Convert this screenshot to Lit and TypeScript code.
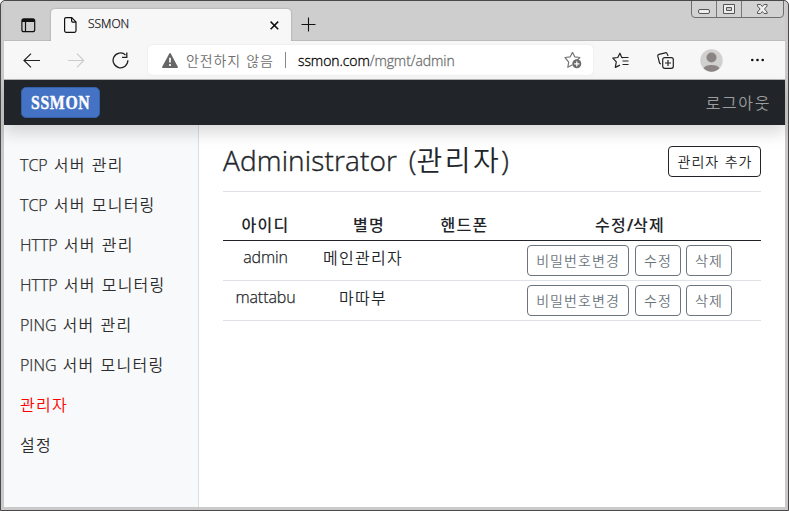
import { LitElement, html, css } from "lit";
import { customElement } from "lit/decorators.js";
import { classMap } from "lit/directives/class-map.js";

/** Splits mixed text so that Hangul and Latin runs get their own tracking. */
const mixed = (s: string) =>
  s
    .split(/([\uac00-\ud7a3]+)/)
    .filter((p) => p)
    .map((p) => (/[\uac00-\ud7a3]/.test(p) ? html`<span class="ko">${p}</span>` : html`<span class="en">${p}</span>`));

const textStyles = css`
  .ko {
    font-family: "Noto Sans CJK KR", sans-serif;
    letter-spacing: var(--ko-track, 0.077em);
    font-weight: var(--ko-weight, 350);
  }
  .en {
    white-space: pre;
    letter-spacing: var(--en-track, 0em);
    word-spacing: 0.12em;
    font-weight: var(--en-weight, 300);
    -webkit-text-stroke: 0.25px currentColor;
  }
`;

@customElement("browser-tabs")
class BrowserTabs extends LitElement {
  static styles = [
    textStyles,
    css`
      :host { display: flex; height: 40px; background: #cecece; box-sizing: border-box; position: relative; box-shadow: inset 0 -1px #bcbcbc; }
      .panel { width: 47px; display: flex; padding: 17px 0 0 17px; box-sizing: border-box; }
      .tab { width: 240px; height: 32px; margin-top: 8px; background: #f7f7f7; border-radius: 4px 4px 0 0; display: flex; align-items: center; box-sizing: border-box; padding: 0 12px 0 13px; box-shadow: 0 0 2px rgba(0, 0, 0, 0.3); clip-path: inset(-3px -3px 0 -3px); }
      .name { flex: 1; margin-left: 11px; font-size: 12px; line-height: 16px; margin-top: -2px; color: #111; letter-spacing: 0; font-weight: 300; -webkit-text-stroke: 0.25px currentColor; }
      .plus { margin: 16px 0 0 10px; }
      .controls { position: absolute; right: 1px; top: -1px; display: flex; width: 93px; height: 18px; box-sizing: border-box; border: 1px solid #6e6e6e; border-radius: 0 0 4px 4px; background: #d2d2d2; }
      svg { display: block; flex: none; }
    `,
  ];
  render() {
    return html`
      <div class="panel">
        <svg width="15" height="15" viewBox="0 0 15 15" fill="none" stroke="#111" stroke-width="1.2">
          <rect x=".9" y=".9" width="12.8" height="12.8" rx="2" />
          <path d="M1 3h12.6M1 2h12.6" stroke-width="2" /><path d="M4.5 4v9.5" />
        </svg>
      </div>
      <div class="tab">
        <svg width="13" height="16" viewBox="0 0 13 16" fill="none" stroke="#111" stroke-width="1.2">
          <path d="M2.1.6h5.6l4.3 4.3v8.9a1.5 1.5 0 0 1-1.5 1.5H2.1A1.5 1.5 0 0 1 .6 13.8V2.1A1.5 1.5 0 0 1 2.1.6zM7.6.8v3a1.3 1.3 0 0 0 1.3 1.3h3" />
        </svg>
        <span class="name">SSMON</span>
        <svg width="9" height="9" viewBox="0 0 9 9" stroke="#111" stroke-width="1.5"><path d="M.6.6l7.6 7.6M8.2.6L.6 8.2" /></svg>
      </div>
      <svg class="plus" width="15" height="15" viewBox="0 0 15 15" stroke="#111" stroke-width="1.1"><path d="M7.5.5v14M.5 7.5h14" /></svg>
      <div class="controls">
        <svg width="91" height="16" viewBox="0 0 91 16" fill="none" stroke="#555">
          <path d="M24.5 0v16M49.5 0v16" stroke="#777" />
          <rect x="6.5" y="8.5" width="11" height="4" rx="1.5" fill="#eee" />
          <path d="M31.5 3.5h11v9h-11z" fill="#eee" /><path d="M34.5 6.5h5v3h-5z" fill="#ccc" />
          <path d="M65.5 3.5h3l1.8 2 1.8-2h3v1.5l-2.6 3 2.6 3v1.5h-3l-1.8-2-1.8 2h-3V11l2.6-3-2.6-3z" fill="#eee" />
        </svg>
      </div>
    `;
  }
}

@customElement("browser-toolbar")
class BrowserToolbar extends LitElement {
  static styles = [
    textStyles,
    css`
      :host { display: flex; height: 38px; align-items: center; background: #f7f7f7; border-bottom: 1px solid #b4b4b4; box-sizing: content-box; }
      svg { display: block; flex: none; }
      .back { margin-left: 19px; }
      .forward { margin-left: 28px; }
      .reload { margin-left: 27px; }
      .address { margin-left: 19px; width: 445px; height: 30px; box-sizing: border-box; border-radius: 4px; background: #fff; box-shadow: 0 0 2px rgba(0, 0, 0, 0.1); display: flex; align-items: center; padding: 0 11px 0 14px; font-size: 14px; color: #6e6e6e; }
      .unsafe { margin-left: 8px; white-space: nowrap; --ko-track: 0.062em; width: 89px; }
      .rule { width: 1px; height: 16px; background: #888; margin: 0 12px 0 10px; }
      .url { flex: 1; letter-spacing: -0.006em; font-weight: 300; -webkit-text-stroke: 0.3px currentColor; }
      .host { color: #000; }
      .fav { margin-left: 19px; }
      .collections { margin-left: 28px; }
      .avatar { margin-left: 26px; }
      .more { margin-left: 28px; }
    `,
  ];
  render() {
    return html`
      <svg class="back" width="17" height="15" viewBox="0 0 17 15" fill="none" stroke="#222" stroke-width="1.2"><path d="M8 .6L1 7.5l7 6.9M1 7.5h16" /></svg>
      <svg class="forward" width="17" height="15" viewBox="0 0 17 15" fill="none" stroke="#ccc" stroke-width="1.2"><path d="M9 .6l6.700 6.900L9 14.400M15.700 7.500H0" /></svg>
      <svg class="reload" width="17" height="17" viewBox="0 0 17 17" fill="none" stroke="#222" stroke-width="1.3"><path d="M13.500 2.900A7.400 7.400 0 1 0 15.900 8.300M14.800.5v4.800H10" /></svg>
      <div class="address">
        <svg width="16" height="15" viewBox="0 0 16 15"><path d="M7.200.7a1 1 0 0 1 1.700 0l6.900 13a.9.9 0 0 1-.8 1.300H1a.9.9 0 0 1-.8-1.300z" fill="#666" /><path d="M8 4.800v4.800M8 11v2" stroke="#fff" stroke-width="1.7" /></svg>
        <span class="unsafe">${mixed("안전하지 않음")}</span>
        <span class="rule"></span>
        <span class="url"><span class="host">ssmon.com</span>/mgmt/admin</span>
        <svg width="18" height="18" viewBox="0 0 18 18" fill="none" stroke="#777" stroke-width="1.2">
          <path d="M8.500 1.200l2.200 4.600 5.200.7-3.700 3.600M8.500 13.800l-4.700 2.500.9-5.200L1 6.500l5.200-.7 2.300-4.600" stroke-linejoin="round" />
          <circle cx="12.8" cy="12.8" r="4.5" fill="#6a6a6a" stroke="none" /><path d="M12.800 10.200v5.200M10.200 12.800h5.200" stroke="#fff" />
        </svg>
      </div>
      <svg class="fav" width="17" height="17" viewBox="0 0 17 17" fill="none" stroke="#222" stroke-width="1.2">
        <path d="M11.200 5.800L9.800 5.500 7.900 1.200 5.800 5.500.8 6.200l3.500 3.700-1 5.500 4.600-2.300" stroke-linejoin="round" /><path d="M9.800 5.500H16.500M10.500 9H16.500M10.500 12.500H16.500" />
      </svg>
      <svg class="collections" width="17" height="17" viewBox="0 0 17 17" fill="none" stroke="#222" stroke-width="1.2">
        <path d="M3.9 11.900a1.800 1.800 0 0 1-1.500-1.400L.8 4.200A1.600 1.600 0 0 1 2 2.300L8.300.8a1.600 1.600 0 0 1 1.900 1.100l.9 2.100" />
        <rect x="5.700" y="5.700" width="10.600" height="10.600" rx="2" fill="#f7f7f7" /><path d="M11 8v6M8 11h6" />
      </svg>
      <svg class="avatar" width="23" height="23" viewBox="0 0 23 23">
        <circle cx="11.500" cy="11.500" r="11.200" fill="#d2d0ce" /><circle cx="11.500" cy="8.500" r="5" fill="#8a8583" />
        <path d="M3.500 19.300a8.500 5 0 0 1 16 0 11.200 11.200 0 0 1-16 0z" fill="#8a8583" />
      </svg>
      <svg class="more" width="14" height="4" viewBox="0 0 14 4" fill="#111"><circle cx="1.300" cy="2" r="1.300" /><circle cx="6.500" cy="2" r="1.300" /><circle cx="11.700" cy="2" r="1.300" /></svg>
    `;
  }
}

@customElement("site-header")
class SiteHeader extends LitElement {
  static styles = [
    textStyles,
    css`
      :host { display: flex; justify-content: space-between; align-items: center; height: 45px; box-sizing: border-box; padding: 0 14px 0 17px; background: #212529; box-shadow: 0 8px 16px rgba(0, 0, 0, 0.15); position: relative; z-index: 1; }
      .logo { width: 79px; height: 31px; box-sizing: border-box; border: 1px solid #3560a8; border-radius: 5px; background: #4472c4; display: flex; align-items: center; justify-content: center; color: #fff; font: bold 19px/1 "Liberation Serif", serif; }
      .mark { transform: scaleX(0.83); letter-spacing: 0.04em; -webkit-text-stroke: 0.4px #fff; }
      .logout { font-size: 16px; color: #9b9d9e; --ko-track: 0.1em; margin-top: -1px; }
    `,
  ];
  render() {
    return html`<div class="logo"><span class="mark">SSMON</span></div><span class="logout">${mixed("로그아웃")}</span>`;
  }
}

@customElement("side-menu")
class SideMenu extends LitElement {
  static styles = [
    textStyles,
    css`
      :host { display: block; width: 195px; box-sizing: border-box; padding: 19px 0 0 16px; background: #f8f9fa; border-right: 1px solid #dedede; color: #2c2c2c; }
      .item { height: 40px; line-height: 40px; font-size: 16px; white-space: nowrap; }
      .active { color: #f00; }
    `,
  ];
  items = ["TCP 서버 관리", "TCP 서버 모니터링", "HTTP 서버 관리", "HTTP 서버 모니터링", "PING 서버 관리", "PING 서버 모니터링", "관리자", "설정"];
  render() {
    return this.items.map((t) => html`<div class=${classMap({ item: true, active: t === "관리자" })}>${mixed(t)}</div>`);
  }
}

@customElement("admin-panel")
class AdminPanel extends LitElement {
  static styles = [
    textStyles,
    css`
      :host { display: block; flex: 1; padding: 16px 24px 0; color: #212529; background: #fff; }
      .head { display: flex; justify-content: space-between; height: 50px; border-bottom: 1px solid #dee2e6; margin-bottom: 17px; }
      h1 { margin: -1px 0 0; font-size: 28px; line-height: 38px; font-weight: 400; white-space: nowrap; --en-track: 0.005em; --ko-track: 0.09em; }
      h1 .en { word-spacing: 0.15em; -webkit-text-stroke: 0.4px currentColor; }
      .btn { height: 31px; box-sizing: border-box; border: 1px solid #6c757d; border-radius: 4px; color: #6c757d; font-size: 14px; line-height: 29px; padding: 0 0 0 1px; text-align: center; white-space: nowrap; }
      .add { width: 93px; margin-top: 5px; border-color: #212529; color: #212529; }
      .wide { width: 102px; margin-right: 6px; }
      .small { width: 46px; }
      .small + .small { margin-left: 5px; }
      .row { display: grid; grid-template-columns: 85px 110px 81px 262px; height: 39px; border-bottom: 1px solid #dee2e6; font-size: 16px; line-height: 24px; text-align: center; --en-track: -0.006em; }
      .row > * { padding-top: 4px; }
      .titles { grid-template-columns: 85px 122px 69px 262px; height: 31px; border-color: #212529; --en-weight: 600; --ko-weight: 500; }
      .titles > * { padding-top: 3px; }
      .actions { display: flex; justify-content: center; margin-left: -2px; }
    `,
  ];
  rows = [
    { id: "admin", alias: "메인관리자" },
    { id: "mattabu", alias: "마따부" },
  ];
  render() {
    return html`
      <div class="head">
        <h1>${mixed("Administrator (관리자)")}</h1>
        <div class="btn add">${mixed("관리자 추가")}</div>
      </div>
      <div class="row titles">${["아이디", "별명", "핸드폰", "수정/삭제"].map((t) => html`<div>${mixed(t)}</div>`)}</div>
      ${this.rows.map(
        (r) => html`<div class="row">
          <div>${mixed(r.id)}</div>
          <div>${mixed(r.alias)}</div>
          <div></div>
          <div class="actions">
            <div class="btn wide">${mixed("비밀번호변경")}</div>
            <div class="btn small">${mixed("수정")}</div>
            <div class="btn small">${mixed("삭제")}</div>
          </div>
        </div>`
      )}
    `;
  }
}

@customElement("app-root")
class AppRoot extends LitElement {
  static styles = css`
    :host { display: flex; flex-direction: column; width: 789px; height: 511px; box-sizing: border-box; overflow: hidden; border: 1px solid #4b484a; border-radius: 5px 5px 0 0; padding: 0 3px 3px; background: #cacaca; font-family: "Open Sans", "Noto Sans CJK KR", sans-serif; }
    .page { display: flex; flex: 1; min-height: 0; }
  `;
  render() {
    return html`
      <browser-tabs></browser-tabs>
      <browser-toolbar></browser-toolbar>
      <site-header></site-header>
      <div class="page"><side-menu></side-menu><admin-panel></admin-panel></div>
    `;
  }
}
